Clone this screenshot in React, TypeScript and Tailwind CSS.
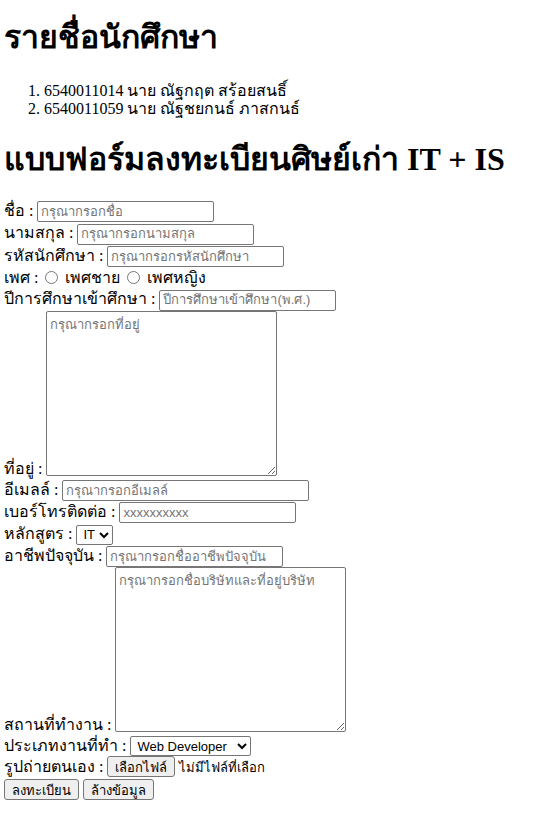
import React from 'react';

const STUDENTS = [
  '6540011014 นาย ณัฐกฤต สร้อยสนธิ์',
  '6540011059 นาย ณัฐชยกนธ์ ภาสกนธ์',
];

const inp = "w-[177px] h-[21px] border border-[#767676] rounded-[2px] px-[3px] text-[13px] font-['Liberation_Sans',sans-serif] placeholder:text-[#757575] align-baseline";
const area = "w-[231px] h-[165px] mb-[3px] border border-[#767676] rounded-[2px] px-[3px] py-[2px] text-[13px] font-['Liberation_Sans',sans-serif] placeholder:text-[#757575] align-bottom resize";
const sel = "h-[20px] pl-[2px] border border-[#767676] rounded-[2px] text-[13px] font-['Liberation_Sans',sans-serif]";
const btn = "h-[21px] px-[7px] border border-[#767676] rounded-[3px] bg-[#efefef] text-[13px] font-['Liberation_Sans',sans-serif]";

export default function App() {
  return (
    <div className="px-[4px] pt-[1px] bg-white text-black text-base font-['Liberation_Serif',serif]">
      <h1 className="text-[32px] font-bold leading-[37px] mt-[18px] mb-[26px]">รายชื่อนักศึกษา</h1>
      <ol className="list-decimal pl-[40px] leading-[18px]">
        {STUDENTS.map((s) => <li key={s}>{s}</li>)}
      </ol>
      <h1 className="text-[32px] font-bold leading-[37px] mt-[23px] mb-[22px]">แบบฟอร์มลงทะเบียนศิษย์เก่า IT + IS</h1>
      <form className="leading-[21.5px]">
        <div>ชื่อ : <input className={inp} placeholder="กรุณากรอกชื่อ" /></div>
        <div>นามสกุล : <input className={inp} placeholder="กรุณากรอกนามสกุล" /></div>
        <div>รหัสนักศึกษา : <input className={inp} placeholder="กรุณากรอกรหัสนักศึกษา" /></div>
        <div>
          เพศ : <input type="radio" name="g" className="w-[13px] h-[13px] mx-[3px] align-[-1px]" /> เพศชาย{' '}
          <input type="radio" name="g" className="w-[13px] h-[13px] mx-[3px] align-[-1px]" /> เพศหญิง
        </div>
        <div>ปีการศึกษาเข้าศึกษา : <input className={inp} placeholder="ปีการศึกษาเข้าศึกษา(พ.ศ.)" /></div>
        <div>ที่อยู่ : <textarea className={area} placeholder="กรุณากรอกที่อยู่" /></div>
        <div>อีเมลล์ : <input type="email" className={inp.replace('w-[177px]', 'w-[247px]')} placeholder="กรุณากรอกอีเมลล์" /></div>
        <div>เบอร์โทรติดต่อ : <input className={inp} placeholder="xxxxxxxxxx" /></div>
        <div>
          หลักสูตร :{' '}
          <select className={sel}>
            <option>IT</option>
            <option>IS</option>
          </select>
        </div>
        <div>อาชีพปัจจุบัน : <input className={inp} placeholder="กรุณากรอกชื่ออาชีพปัจจุบัน" /></div>
        <div>สถานที่ทำงาน : <textarea className={area} placeholder="กรุณากรอกชื่อบริษัทและที่อยู่บริษัท" /></div>
        <div>
          ประเภทงานที่ทำ :{' '}
          <select className={`${sel} w-[121px]`}>
            <option>Web Developer</option>
            <option>Programmer</option>
          </select>
        </div>
        <div>
          รูปถ่ายตนเอง : <button type="button" className={btn}>เลือกไฟล์</button>{' '}
          <span className="text-[13px] font-['Liberation_Sans',sans-serif]">ไม่มีไฟล์ที่เลือก</span>
        </div>
        <div className="flex gap-[4px]">
          <button type="submit" className={btn}>ลงทะเบียน</button>
          <button type="reset" className={btn}>ล้างข้อมูล</button>
        </div>
      </form>
    </div>
  );
}
